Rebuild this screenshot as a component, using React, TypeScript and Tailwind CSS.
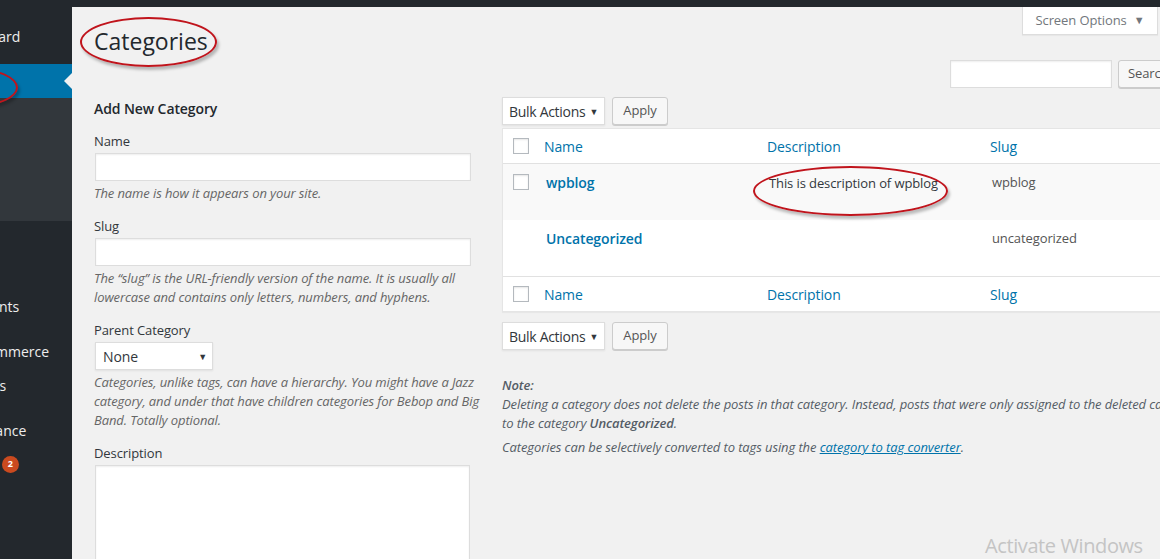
const font = { fontFamily: '"Segoe UI", "Open Sans", sans-serif' };

function Caret() {
  return <span className="text-[9px] leading-none text-[#32373c]">▼</span>;
}

function Checkbox() {
  return <span className="block w-4 h-4 border border-[#b4b9be] bg-white shadow-[inset_0_1px_2px_rgba(0,0,0,0.1)]" />;
}

// red marker ring drawn over the screenshot
function Ring({ className }: { className: string }) {
  return (
    <div
      className={`absolute rounded-[50%] border-2 border-[#c0141c] shadow-[2px_3px_3px_rgba(0,0,0,0.25)] pointer-events-none ${className}`}
    />
  );
}

function BulkActions() {
  return (
    <div className="flex gap-[7px]">
      <div className="w-[103px] h-[28px] bg-white border border-[#ddd] shadow-[0_1px_2px_rgba(0,0,0,0.07)] flex items-center justify-between pl-[6px] pr-[6px] text-[14px] tracking-[-0.3px] whitespace-nowrap text-[#32373c]">
        <span>Bulk Actions</span>
        <Caret />
      </div>
      <div className="w-[56px] h-[28px] bg-[#f7f7f7] border border-[#ccc] rounded-[3px] shadow-[0_1px_0_#ccc] flex items-center justify-center text-[13px] text-[#555]">
        Apply
      </div>
    </div>
  );
}

function SideItem({ label, top = false, badge }: { label: string; top?: boolean; badge?: string }) {
  return (
    <div className={`h-[34px] flex items-center pl-[36px] text-[14px] text-[#eee] whitespace-nowrap ${top ? 'mt-[11px]' : ''}`}>
      <span>{label}</span>
      {badge && (
        <span className="ml-[7px] w-[17px] h-[17px] rounded-full bg-[#ca4a1f] text-white text-[9px] font-bold flex items-center justify-center">
          {badge}
        </span>
      )}
    </div>
  );
}

const inputBox = 'bg-white border border-[#ddd] shadow-[inset_0_1px_2px_rgba(0,0,0,0.07)]';

export default function App() {
  return (
    <div className="w-[1160px] h-[559px] overflow-hidden relative bg-[#f1f1f1]" style={font}>
      {/* admin bar edge */}
      <div className="h-[7px] bg-[#23282d]" />

      <div className="flex h-[552px]">
        {/* Sidebar, only its right part is in view */}
        <aside className="w-[72px] shrink-0 bg-[#23282d] overflow-hidden relative">
          <div className="w-[160px] ml-[-88px] pt-[12px]">
            <SideItem label="Dashboard" />
            <div className="mt-[11px] h-[34px] bg-[#0073aa] relative flex items-center pl-[36px] text-[14px] text-white">
              Posts
              <span className="absolute right-0 top-[9px] w-0 h-0 border-y-[8px] border-y-transparent border-r-[8px] border-r-[#f1f1f1]" />
            </div>
            <div className="bg-[#32373c] h-[123px] pt-[7px] text-[13px] text-[#b4b9be]">
              <div className="h-[26px] pl-[12px] flex items-center">All Posts</div>
              <div className="h-[26px] pl-[12px] flex items-center">Add New</div>
              <div className="h-[26px] pl-[12px] flex items-center text-white font-semibold">Categories</div>
              <div className="h-[26px] pl-[12px] flex items-center">Tags</div>
            </div>
            <SideItem label="Media" />
            <SideItem label="Pages" />
            <SideItem label="Comments" />
            <SideItem label="WooCommerce" top />
            <SideItem label="Products" />
            <SideItem label="Appearance" top />
            <SideItem label="Plugins" badge="2" />
          </div>
          <Ring className="left-[-62px] top-[62px] w-[80px] h-[37px]" />
        </aside>

        {/* Main content */}
        <main className="flex-1 min-w-0 relative text-[13px] tracking-[-0.1px] text-[#32373c]">
          <div className="flex justify-between">
            <h1 className="ml-[22px] mt-[20px] text-[23px] leading-[29px] tracking-normal text-[#23282d]">Categories</h1>
            <div className="mr-[2px] w-[136px] h-[28px] bg-white border border-t-0 border-[#ddd] shadow-[0_1px_1px_rgba(0,0,0,0.04)] flex items-center justify-center gap-[7px] text-[13px] text-[#72777c] whitespace-nowrap">
              <span>Screen Options</span>
              <span className="text-[11px]">▼</span>
            </div>
          </div>

          <div className="flex gap-[6px] pl-[878px] mt-[4px]">
            <div className={`w-[162px] h-[28px] shrink-0 ${inputBox}`} />
            <div className="w-[64px] h-[28px] shrink-0 bg-[#f7f7f7] border border-[#ccc] rounded-[3px] shadow-[0_1px_0_#ccc] pl-[9px] flex items-center text-[13px] text-[#555]">
              Search
            </div>
          </div>

          <div className="flex gap-[12px] ml-[22px] mt-[9px]">
            {/* Add new category form */}
            <section className="w-[396px] shrink-0 pt-[2px]">
              <h2 className="text-[14px] leading-[20px] font-semibold text-[#23282d]">Add New Category</h2>

              <div className="mt-[13px]">
                <div className="leading-[19px]">Name</div>
                <div className={`mt-[2px] ml-[1px] w-[376px] h-[28px] ${inputBox}`} />
                <p className="mt-[3px] leading-[19px] italic text-[#666]">The name is how it appears on your site.</p>
              </div>

              <div className="mt-[14px]">
                <div className="leading-[19px]">Slug</div>
                <div className={`mt-[2px] ml-[1px] w-[376px] h-[28px] ${inputBox}`} />
                <p className="mt-[3px] leading-[19px] italic text-[#666]">
                  The “slug” is the URL-friendly version of the name. It is usually all lowercase and contains only letters, numbers, and hyphens.
                </p>
              </div>

              <div className="mt-[14px]">
                <div className="leading-[19px]">Parent Category</div>
                <div className="mt-[2px] ml-[1px] w-[118px] h-[28px] bg-white border border-[#ddd] shadow-[0_1px_2px_rgba(0,0,0,0.07)] flex items-center justify-between pl-[7px] pr-[5px] text-[14px]">
                  <span>None</span>
                  <Caret />
                </div>
                <p className="mt-[3px] leading-[19px] italic text-[#666]">
                  Categories, unlike tags, can have a hierarchy. You might have a Jazz category, and under that have children categories for Bebop and Big Band. Totally optional.
                </p>
              </div>

              <div className="mt-[14px]">
                <div className="leading-[19px]">Description</div>
                <div className={`mt-[2px] ml-[1px] w-[375px] h-[110px] ${inputBox}`} />
              </div>
            </section>

            {/* Category list */}
            <section className="w-[750px] shrink-0">
              <BulkActions />

              <div className="mt-[3px] bg-white border border-[#e5e5e5] shadow-[0_1px_1px_rgba(0,0,0,0.04)]">
                <div className="flex h-[35px] items-center border-b border-[#e1e1e1] text-[14px] text-[#0073aa]">
                  <div className="w-[33px] pl-[10px]"><Checkbox /></div>
                  <div className="w-[223px] pl-[8px]">Name</div>
                  <div className="w-[223px] pl-[8px]">Description</div>
                  <div className="w-[223px] pl-[8px]">Slug</div>
                </div>

                <div className="flex h-[56px] bg-[#f9f9f9] pt-[9px] leading-[19px]">
                  <div className="w-[33px] pl-[10px] pt-[1px]"><Checkbox /></div>
                  <div className="w-[223px] pl-[10px] text-[14px] font-semibold text-[#0073aa]">wpblog</div>
                  <div className="w-[223px] pl-[10px] pt-[1px]">This is description of wpblog</div>
                  <div className="w-[223px] pl-[10px] text-[#555]">wpblog</div>
                </div>

                <div className="flex h-[56px] pt-[9px] leading-[19px]">
                  <div className="w-[33px]" />
                  <div className="w-[223px] pl-[10px] text-[14px] font-semibold text-[#0073aa]">Uncategorized</div>
                  <div className="w-[223px] pl-[10px]" />
                  <div className="w-[223px] pl-[10px] text-[#555]">uncategorized</div>
                </div>

                <div className="flex h-[35px] items-center border-t border-[#e1e1e1] text-[14px] text-[#0073aa]">
                  <div className="w-[33px] pl-[10px]"><Checkbox /></div>
                  <div className="w-[223px] pl-[8px]">Name</div>
                  <div className="w-[223px] pl-[8px]">Description</div>
                  <div className="w-[223px] pl-[8px]">Slug</div>
                </div>
              </div>

              <div className="mt-[10px]">
                <BulkActions />
              </div>

              <div className="mt-[26px] italic text-[#555d66] leading-[19px]">
                <p>
                  <strong className="font-semibold">Note:</strong>
                  <br />
                  Deleting a category does not delete the posts in that category. Instead, posts that were only assigned to the deleted category are set to the category <strong className="font-semibold">Uncategorized</strong>.
                </p>
                <p className="mt-[5px]">
                  Categories can be selectively converted to tags using the{' '}
                  <span className="text-[#0073aa] underline">category to tag converter</span>.
                </p>
              </div>
            </section>
          </div>

          <Ring className="left-[8px] top-[10px] w-[137px] h-[50px]" />
          <Ring className="left-[681px] top-[159px] w-[195px] h-[50px]" />
        </main>
      </div>

      {/* watermark */}
      <div className="absolute left-[985px] top-[532px] text-[20px] tracking-[-0.4px] text-[#c4c4c4] leading-[28px]">Activate Windows</div>
    </div>
  );
}
